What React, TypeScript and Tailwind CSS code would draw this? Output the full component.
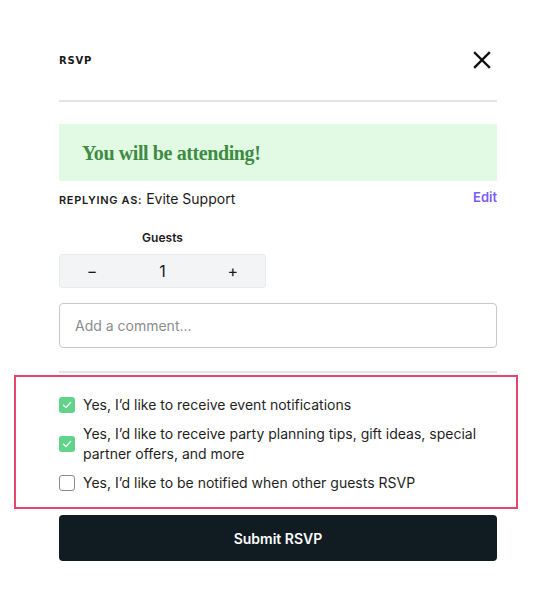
import { useState } from "react";

interface OptIn {
  id: string;
  label: string;
  checked: boolean;
}

const optIns: OptIn[] = [
  { id: "notify", label: "Yes, I’d like to receive event notifications", checked: true },
  {
    id: "tips",
    label: "Yes, I’d like to receive party planning tips, gift ideas, special partner offers, and more",
    checked: true,
  },
  { id: "guests", label: "Yes, I’d like to be notified when other guests RSVP", checked: false },
];

const CloseIcon = () => (
  <svg width="18" height="18" viewBox="0 0 18 18" fill="none">
    <path d="M2 2L16 16M16 2L2 16" stroke="#111" strokeWidth="2.4" strokeLinecap="square" />
  </svg>
);

const CheckBox = ({ checked, onToggle }: { checked: boolean; onToggle: () => void }) => (
  <button
    type="button"
    onClick={onToggle}
    className={
      checked
        ? "w-4 h-4 shrink-0 rounded-[3px] bg-[#62d38b] flex items-center justify-center"
        : "w-4 h-4 shrink-0 rounded-[3px] border-[1.5px] border-[#8a8a8a] bg-white"
    }
  >
    {checked && (
      <svg width="10" height="10" viewBox="0 0 10 10" fill="none">
        <path d="M1.5 5.2L4 7.6L8.6 2.4" stroke="white" strokeWidth="1.3" strokeLinecap="round" strokeLinejoin="round" />
      </svg>
    )}
  </button>
);

export default function App() {
  const [guests, setGuests] = useState(1);
  const [checks, setChecks] = useState(optIns.map((o) => o.checked));

  return (
    <div className="w-[554px] h-[608px] bg-white font-['Inter',sans-serif] text-[#1b1b1b] pt-[50px] pl-[59px] pr-[57px]">
      <div className="h-[20px] flex items-center justify-between">
        <span className="text-[10px] font-bold tracking-[0.08em] font-['DejaVu_Sans',sans-serif] pt-[1px]">RSVP</span>
        <span className="mr-[6px]">
          <CloseIcon />
        </span>
      </div>

      <div className="mt-[30px] border-t-2 border-[#e4e4e6]" />

      <div className="mt-[22px] h-[57px] bg-[#e2f9e3] px-[23px] flex items-center">
        <p className="font-['Liberation_Serif',serif] font-bold text-[20px] tracking-[-0.02em] text-[#3e8b44] pt-[1px]">
          You will be attending!
        </p>
      </div>

      <div className="mt-[7px] h-[20px] flex items-center justify-between">
        <p className="flex items-baseline gap-[4px]">
          <span className="text-[11px] font-semibold tracking-[0.06em]">REPLYING AS:</span>
          <span className="text-[14px]">Evite Support</span>
        </p>
        <span className="text-[13px] font-semibold text-[#7b5cf2]">Edit</span>
      </div>

      <div className="mt-[22px] w-[207px]">
        <p className="h-[16px] text-[12px] font-semibold text-center leading-[16px]">Guests</p>
        <div className="mt-[8px] h-[34px] bg-[#f3f4f6] border border-[#e9eaee] rounded-[3px] grid grid-cols-3 items-center text-center text-[16px]">
          <button type="button" className="pr-[4px]" onClick={() => setGuests(Math.max(0, guests - 1))}>
            −
          </button>
          <span>{guests}</span>
          <button type="button" className="pl-[4px]" onClick={() => setGuests(guests + 1)}>
            +
          </button>
        </div>
      </div>

      <input
        placeholder="Add a comment..."
        className="mt-[15px] w-full h-[45px] border border-[#c9c9cc] rounded-[4px] px-[15px] text-[14px] placeholder:text-[#8b8b8f] outline-none"
      />

      <div className="mt-[23px] border-t-2 border-[#e4e4e6]" />

      <div className="mt-[2px] -ml-[45px] -mr-[21px] border-2 border-[#e8456c] pl-[43px] pr-[18px] pt-[18px] pb-[14px] flex flex-col gap-[9px]">
        {optIns.map((o, i) => (
          <label key={o.id} className="flex items-center gap-[8px] text-[14px] leading-[20px] text-[#1f1f1f]">
            <CheckBox
              checked={checks[i]}
              onToggle={() => setChecks(checks.map((c, j) => (j === i ? !c : c)))}
            />
            <span className="max-w-[400px]">{o.label}</span>
          </label>
        ))}
      </div>

      <button
        type="button"
        className="mt-[6px] w-full h-[46px] bg-[#111b22] rounded-[4px] text-white text-[14px] font-semibold"
      >
        Submit RSVP
      </button>
    </div>
  );
}
